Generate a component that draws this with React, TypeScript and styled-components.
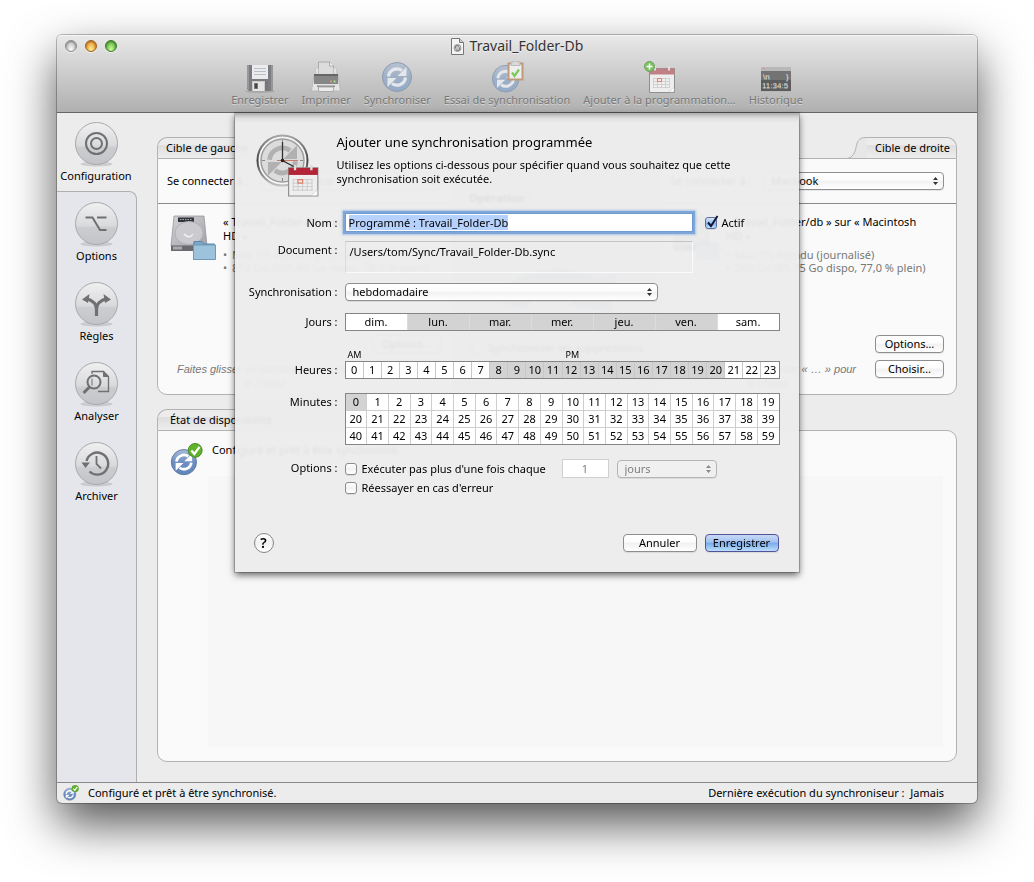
import React, { useEffect, useRef, useState } from 'react';
import styled, { createGlobalStyle, css } from 'styled-components';

const GlobalStyle = createGlobalStyle`
  *, *::before, *::after { box-sizing: border-box; }
  body {
    margin: 0;
    background: #fff;
    color: #000;
    font: 11px/14px "Lucida Grande", "Noto Sans", "Open Sans", sans-serif;
  }
  button, input, select { font: inherit; color: inherit; margin: 0; }
`;

/* ---------- window frame ---------- */

const Desktop = styled.div`
  display: flex;
  min-height: 100vh;
  padding: 35px 57px 79px;
`;

const Window = styled.div`
  flex: 1;
  display: flex;
  flex-direction: column;
  min-width: 0;
  border-radius: 5px;
  background: #ececec;
  box-shadow: 0 0 0 1px rgba(0, 0, 0, 0.25), 0 21px 48px rgba(0, 0, 0, 0.68);
`;

const Header = styled.header`
  height: 78px;
  border-bottom: 1px solid #666;
  border-radius: 5px 5px 0 0;
  background: linear-gradient(#e9e9e9, #cfcfcf 45%, #b0b0b0);
  box-shadow: inset 0 1px #f6f6f6;
`;

const TitleBar = styled.div`
  display: grid;
  grid-template-columns: 1fr auto 1fr;
  align-items: center;
  height: 22px;
  padding: 0 8px;
`;

const Lights = styled.div`
  display: flex;
  gap: 8px;
`;

const Light = styled.button<{ $rim: string; $core: string; $glow: string }>`
  width: 12px;
  height: 12px;
  padding: 0;
  border: 1px solid ${(p) => p.$rim};
  border-radius: 50%;
  background: radial-gradient(ellipse at 50% 90%, ${(p) => p.$glow}, ${(p) => p.$core} 75%);
  box-shadow: inset 0 1px 2px rgba(0, 0, 0, 0.35), 0 1px rgba(255, 255, 255, 0.6);
`;

const Title = styled.h1`
  display: flex;
  align-items: center;
  gap: 6px;
  margin: 0;
  color: #333;
  font-size: 14px;
  font-weight: 400;
  text-shadow: 0 1px rgba(255, 255, 255, 0.6);
`;

const Toolbar = styled.div`
  display: flex;
  justify-content: center;
  gap: 13px;
  padding-top: 4px;
`;

const ToolButton = styled.button`
  display: flex;
  flex-direction: column;
  align-items: center;
  padding: 0;
  border: 0;
  background: none;
  color: #787878;
  white-space: nowrap;
  text-shadow: 0 1px rgba(255, 255, 255, 0.45);
`;

const Body = styled.div`
  position: relative;
  flex: 1;
  display: flex;
  min-height: 0;
`;

const StatusBar = styled.footer`
  display: flex;
  align-items: center;
  justify-content: space-between;
  height: 21px;
  padding: 0 33px 0 6px;
  border-top: 1px solid #8a8a8a;
  border-radius: 0 0 5px 5px;
`;

const StatusText = styled.span`
  display: flex;
  align-items: center;
  gap: 9px;
`;

/* ---------- side bar ---------- */

const SideBar = styled.nav`
  display: flex;
  flex-direction: column;
  flex: 0 0 80px;
`;

const SideGroup = styled.div`
  flex: 1;
  border: 1px solid #b0b0b0;
  border-width: 1px 1px 0 0;
  border-top-right-radius: 8px;
  background: #e4e6eb;
`;

const SideButton = styled.button`
  display: flex;
  flex-direction: column;
  align-items: center;
  gap: 2px;
  width: 100%;
  height: 80px;
  padding: 10px 0 0;
  border: 0;
  background: none;
`;

const SideTop = styled.div`
  height: 78px;
  padding-right: 2px;

  ${SideButton} { padding-top: 9px; }
`;

/* ---------- panels ---------- */

const Main = styled.main`
  flex: 1;
  display: flex;
  flex-direction: column;
  gap: 14px;
  min-width: 0;
  padding: 24px 20px 20px;
`;

const Targets = styled.div`
  display: grid;
  grid-template-columns: 297px 1fr 297px;
  height: 258px;
`;

const Panel = styled.section`
  display: flex;
  flex-direction: column;
  min-width: 0;
`;

const GrowPanel = styled(Panel)`
  flex: 1;
`;

const TabRow = styled.div<{ $right?: boolean }>`
  display: flex;
  flex-direction: ${(p) => (p.$right ? 'row-reverse' : 'row')};
  height: 21px;
`;

const Tab = styled.h2<{ $right?: boolean; $pad: number }>`
  margin: 0;
  padding: 3px ${(p) => (p.$right ? `${p.$pad}px 0 8px` : `2px 0 ${p.$pad}px`)};
  border: 1px solid #b2b2b2;
  border-width: ${(p) => (p.$right ? '1px 1px 0 0' : '1px 0 0 1px')};
  border-radius: ${(p) => (p.$right ? '0 10px 0 0' : '10px 0 0 0')};
  background: linear-gradient(#ececec 35%, #dedede 38%, #eee);
  font-size: 11px;
  font-weight: 400;
  white-space: nowrap;
`;

const Box = styled.div<{ $right?: boolean }>`
  flex: 1;
  display: flex;
  flex-direction: column;
  border: 1px solid #b2b2b2;
  border-radius: ${(p) => (p.$right ? '10px 0 10px 10px' : '0 10px 10px 10px')};
  background: #fafafa;
`;

const ConnectRow = styled.label`
  display: flex;
  align-items: center;
  justify-content: space-between;
  height: 45px;
  padding: 0 12px 1px 9px;
  border-bottom: 1px solid #8a8a8a;
`;

const Volume = styled.div`
  display: flex;
  gap: 6px;
  padding: 11px 12px 0 11px;
`;

const VolumeName = styled.p`
  max-width: 208px;
  margin: 0 0 5px;
`;

const VolumeFacts = styled.ul`
  margin: 0;
  padding: 0 0 0 9px;
  color: #777;
  line-height: 13px;
  list-style: none;
  white-space: nowrap;

  li::before { content: "•"; float: left; margin-left: -9px; }
`;

const VolumeFoot = styled.div`
  display: grid;
  grid-template-columns: 1fr 69px;
  align-items: end;
  gap: 8px;
  margin-top: auto;
  padding: 0 12px 4px 8px;
`;

const Hint = styled.p`
  margin: 0;
  color: #777;
  font: italic 11px/14px "Liberation Sans", sans-serif;
  text-align: center;
`;

const FootButtons = styled.div`
  display: flex;
  flex-direction: column;
  gap: 7px;
  padding-bottom: 12px;
`;

const Operation = styled.section`
  display: flex;
  flex-direction: column;
  align-items: center;
  padding-top: 54px;
`;

const OperationTitle = styled.h2`
  align-self: flex-start;
  margin: 0 0 60px 15px;
  font-size: 11px;
`;

const StateRow = styled.div`
  display: flex;
  gap: 9px;
  padding: 12px 12px 0;
`;

const StateText = styled.p`
  margin: 0;
`;

const Log = styled.div`
  flex: 1;
  margin: 0 13px 14px 50px;
  background: #f7f7f7;
`;

/* ---------- controls ---------- */

const control = css`
  height: 18px;
  border: 1px solid #8e8e8e;
  border-radius: 4px;
  background: linear-gradient(#fff, #fcfcfc 45%, #f1f1f1 50%, #fff);
  box-shadow: 0 1px rgba(0, 0, 0, 0.08);
`;

const PushButton = styled.button<{ $main?: boolean; $width: number }>`
  ${control}
  width: ${(p) => p.$width}px;
  padding: 0;
  line-height: 16px;
  white-space: nowrap;
  ${(p) =>
    p.$main &&
    css`
      border-color: #55529c;
      background: linear-gradient(#c8d9f4, #a3c2f0 45%, #79a9eb 50%, #b9e0fb);
    `}
`;

const SelectFrame = styled.span<{ $width: number }>`
  position: relative;
  display: block;
  width: ${(p) => p.$width}px;
  max-width: 100%;
`;

const NativeSelect = styled.select`
  ${control}
  display: block;
  appearance: none;
  width: 100%;
  padding: 0 18px 0 7px;
  line-height: 16px;

  &:disabled {
    border-color: #b5b5b5;
    background: #f0f0f0;
    color: #7e7e7e;
    opacity: 1;
  }
`;

const Arrows = styled.svg`
  position: absolute;
  top: 5px;
  right: 6px;
  pointer-events: none;
`;

const Check = styled.input`
  appearance: none;
  display: grid;
  place-items: center;
  flex: none;
  width: 12px;
  height: 12px;
  border: 1px solid #8c8c8c;
  border-radius: 3px;
  background: linear-gradient(#fff, #f2f2f2 50%, #fff);
  box-shadow: 0 1px rgba(0, 0, 0, 0.08);

  &:checked {
    border-color: #5c6c9c;
    background: linear-gradient(#d9e6f8, #8bb6ee 60%, #bfe2fb);
  }
`;

const CheckFrame = styled.span`
  position: relative;
  display: block;
`;

const Tick = styled.svg`
  position: absolute;
  left: 0;
  bottom: 0;
  pointer-events: none;
`;

const CheckLabel = styled.label`
  display: flex;
  align-items: center;
  gap: 5px;
  white-space: nowrap;
`;

/* ---------- sheet ---------- */

const SheetLayer = styled.div`
  position: absolute;
  inset: 0 0 auto -1px;
  display: flex;
  justify-content: center;
`;

const Sheet = styled.form`
  width: 564px;
  padding: 21px 20px 19px 21px;
  background: linear-gradient(rgba(0, 0, 0, 0.28), rgba(0, 0, 0, 0.06) 5px, transparent 10px), rgba(236, 236, 236, 0.95);
  backdrop-filter: blur(1px);
  box-shadow: 0 0 0 1px rgba(0, 0, 0, 0.2), 0 3px 7px rgba(0, 0, 0, 0.6);
`;

const SheetHead = styled.div`
  display: flex;
  gap: 18px;
  margin-bottom: 15px;
`;

const SheetTitle = styled.h2`
  margin: 0 0 8px;
  font-size: 13px;
  line-height: 16px;
  font-weight: 400;
`;

const SheetIntro = styled.p`
  margin: 0;
  max-width: 430px;
`;

const Fields = styled.div`
  display: grid;
  grid-template-columns: 82px 435px;
  column-gap: 7px;
`;

const FieldName = styled.label<{ $top: number }>`
  margin-left: -20px;
  padding-top: ${(p) => p.$top}px;
  text-align: right;
  white-space: nowrap;
`;

const Field = styled.div<{ $after: number }>`
  display: flex;
  align-items: center;
  margin-bottom: ${(p) => p.$after}px;
`;

const NameInput = styled.input`
  width: 348px;
  height: 19px;
  margin-right: 12px;
  padding: 0 3px;
  border: 1px solid #6f9bd1;
  outline: 0;
  background: #fff;
  box-shadow: 0 0 0 2px #7ea6d8, 0 0 2px 3px rgba(126, 166, 216, 0.6);

  &::selection { background: #b5d1fc; color: #000; }
`;

const PathBox = styled.output`
  width: 348px;
  height: 32px;
  padding: 3px 4px;
  border: 1px solid #fafafa;
  border-top-color: #c4c4c4;
  border-left-color: #dadada;
`;

const Picker = styled.div<{ $columns: number; $line: string }>`
  display: grid;
  grid-template-columns: repeat(${(p) => p.$columns}, 1fr);
  gap: 1px;
  width: 100%;
  border: 1px solid #858585;
  background: ${(p) => p.$line};
`;

const Cell = styled.button`
  min-width: 0;
  height: 16px;
  padding: 0;
  border: 0;
  background: #fff;
  line-height: 16px;

  &[aria-pressed='true'] { background: #d3d3d3; }
`;

const HalfDays = styled.div`
  display: grid;
  grid-column: 2;
  grid-template-columns: 218px 1fr;
  padding-left: 3px;
  font-size: 9px;
  line-height: 12px;
`;

const Stack = styled.div`
  display: flex;
  flex-direction: column;
  gap: 3px;
`;

const RepeatRow = styled.div`
  display: grid;
  grid-template-columns: 209px auto 1fr;
  align-items: center;
  gap: 8px;
`;

const CountInput = styled.input`
  width: 47px;
  height: 19px;
  padding: 0;
  border: 1px solid #d0d0d0;
  background: #fff;
  text-align: center;

  &:disabled { color: #7e7e7e; }
`;

const SheetFoot = styled.div`
  display: flex;
  align-items: center;
  gap: 8px;
  margin-top: 38px;
`;

const HelpButton = styled.button`
  width: 20px;
  height: 20px;
  margin: 0 auto 0 -2px;
  padding: 0;
  border: 1px solid #858585;
  border-radius: 50%;
  background: linear-gradient(#fff, #f2f2f2 50%, #fff);
  font-size: 14px;
  font-weight: 600;
  line-height: 18px;
`;

/* ---------- drawings ---------- */

const SyncArrows = ({ color = '#fff' }: { color?: string }) => (
  <g fill="none" stroke={color} strokeWidth="3.2">
    <path d="M7.500 15.500a8.500 8.500 0 0 1 13.500-6" />
    <path d="M24.500 16.500a8.500 8.500 0 0 1-13.500 6" />
    <path d="M25.500 6v9h-9z" fill={color} stroke="none" />
    <path d="M6.500 26v-9h9z" fill={color} stroke="none" />
  </g>
);

const SyncBall = ({ id, pale }: { id: string; pale?: boolean }) => (
  <>
    <defs>
      <linearGradient id={id} x2="0" y2="1">
        <stop offset="0" stopColor={pale ? '#b7c3d2' : '#a9bcdb'} />
        <stop offset="0.5" stopColor={pale ? '#9fb0c6' : '#6f8fc0'} />
        <stop offset="1" stopColor={pale ? '#94abc6' : '#5f86bb'} />
      </linearGradient>
    </defs>
    <circle cx="16" cy="16" r="14.500" fill={`url(#${id})`} stroke={pale ? '#8c9bb0' : '#56709c'} />
    <SyncArrows color={pale ? '#e4e8ec' : '#fff'} />
  </>
);

const GoodSync = ({ id, size }: { id: string; size: number }) => (
  <svg width={size} height={size} viewBox="0 0 38 38" aria-hidden="true">
    <g transform="translate(0 6)">
      <SyncBall id={id} />
    </g>
    <circle cx="29" cy="8.500" r="8" fill="#62b32c" stroke="#3d8516" />
    <path d="M24.500 8.500l3.500 4 6-8" fill="none" stroke="#fff" strokeWidth="2.600" />
  </svg>
);

const DocIcon = () => (
  <svg width="13" height="17" viewBox="0 0 13 17" aria-hidden="true">
    <path d="M.5.5h8l4 4v12H.5z" fill="#f4f4f4" stroke="#777" />
    <path d="M8.500.5v4h4" fill="#ccc" stroke="#777" />
    <circle cx="6.500" cy="10" r="3.500" fill="#c4c4c4" stroke="#9c9c9c" />
    <path d="M4.500 10.500a2 2 0 0 1 3.500-2M8.500 9.500a2 2 0 0 1-3.500 2" stroke="#777" fill="none" />
  </svg>
);

const FloppyIcon = () => (
  <svg width="32" height="32" viewBox="0 0 32 32" aria-hidden="true">
    <ellipse cx="16" cy="30.500" rx="15" ry="1.500" fill="#999" opacity=".6" />
    <path d="M3 4h26v26H5l-2-2z" fill="#7b7d82" />
    <path d="M3 4h2v25l-2-2zM27 4h2v26h-2z" fill="#95979b" />
    <path d="M8 4h16v14H8z" fill="#ececec" />
    <path d="M10 7.500h12M10 10.500h12M10 13.500h12" stroke="#b9c0ca" />
    <path d="M8 20h16v10H8z" fill="#c9c9c9" />
    <path d="M9 21h11v9H9z" fill="#e5e5e5" />
    <path d="M10 22h4v6h-4z" fill="#777" />
    <path d="M11 23h2v4h-2z" fill="#444" />
    <path d="M21 20h3v10h-3z" fill="#777" />
  </svg>
);

const PrinterIcon = () => (
  <svg width="32" height="32" viewBox="0 0 32 32" aria-hidden="true">
    <path d="M8.500 1h11l4 4v9h-15z" fill="#dcdcdc" stroke="#aaa" />
    <path d="M19.500 1v4h4" fill="#f5f5f5" stroke="#aaa" />
    <path d="M5.500 7h3v6h-3zM23.500 7h3v6h-3z" fill="#e2e2e2" stroke="#bbb" strokeWidth=".5" />
    <path d="M4 14h24l2.500 16h-29z" fill="#e4e4e4" stroke="#b9b9b9" />
    <path d="M4 13h24v10H4z" fill="#868686" />
    <path d="M4 13h24v2H4z" fill="#666" />
    <path d="M20 19.500h2v2h-2z" fill="#c98" />
    <path d="M23.500 19.500h2v2h-2z" fill="#a3dc84" />
    <path d="M7 24.500h18v1.500H7z" fill="#888" />
    <path d="M8.500 26h15v4.500h-15z" fill="#ebebeb" stroke="#aaa" />
  </svg>
);

const SyncIcon = () => (
  <svg width="32" height="32" viewBox="0 0 32 32" aria-hidden="true">
    <SyncBall id="tool-sync" pale />
  </svg>
);

const TrialIcon = () => (
  <svg width="34" height="32" viewBox="0 0 34 32" aria-hidden="true">
    <g transform="translate(1 3) scale(.92)">
      <SyncBall id="tool-trial" pale />
    </g>
    <path d="M18.500 2.500h14v16h-14z" fill="#eee" stroke="#bd9a7c" strokeWidth="2" />
    <path d="M21 1h2.500V0h4v1H30v3.500h-9z" fill="#dadada" stroke="#aaa" strokeWidth=".7" />
    <path d="M22 11.500l2.500 3.500 4.500-6.500" fill="none" stroke="#7ccb5c" strokeWidth="2.300" />
  </svg>
);

const Calendar = ({ red }: { red: string }) => (
  <>
    <path d="M.5 2.500h25v24H.5z" fill="#eee" stroke="#8f8f8f" />
    <path d="M.5 2.500h25v6H.5z" fill={red} />
    <path d="M6 0v4.500M20 0v4.500" stroke="#ddd" strokeWidth="2" />
    <path d="M4 12.500h17M4 15.500h17M4 18.500h17M4 21.500h17M4.500 12v10M8.500 12v10M12.500 12v10M16.500 12v10M20.500 12v10" stroke="#cacaca" strokeWidth=".8" />
    <path d="M8.500 12.500h4v3h-4z" fill="none" stroke="#e2806a" />
    <path d="M25 21v5h-5z" fill="#fff" stroke="#c2c2c2" strokeWidth=".5" />
  </>
);

const AddCalendarIcon = () => (
  <svg width="32" height="32" viewBox="0 0 32 32" aria-hidden="true">
    <g transform="translate(5 5)">
      <Calendar red="#c08085" />
    </g>
    <circle cx="5.500" cy="5.500" r="5" fill="#7dc167" stroke="#69a556" />
    <path d="M5.500 2.500v6M2.500 5.500h6" stroke="#fff" strokeWidth="1.500" />
  </svg>
);

const HistoryIcon = () => (
  <svg width="32" height="32" viewBox="0 0 32 32" aria-hidden="true">
    <path d="M1 6h30v25H1z" fill="#b8b8b8" />
    <path d="M1 10h30v20H1z" fill="#5c5c5c" />
    <path d="M1 10h30v9H1z" fill="#737373" />
    <path d="M2 7.500h3" stroke="#c99" />
    <g fill="#d0d0d0" fontFamily="Liberation Sans, sans-serif" fontSize="8">
      <text x="3" y="18">\n</text>
      <text x="26" y="18">{'}'}</text>
      <text x="2" y="27">11:34:5</text>
    </g>
  </svg>
);

const Puck = ({ id, children }: { id: string; children: React.ReactNode }) => (
  <svg width="45" height="45" viewBox="0 0 45 45" aria-hidden="true">
    <defs>
      <linearGradient id={id} x2="0" y2="1">
        <stop offset="0" stopColor="#f0f0f1" />
        <stop offset="0.550" stopColor="#d9dadc" />
        <stop offset="0.600" stopColor="#cccdd0" />
        <stop offset="1" stopColor="#c3c4c7" />
      </linearGradient>
    </defs>
    <ellipse cx="22.500" cy="42" rx="16" ry="2.500" fill="#999" opacity=".35" />
    <circle cx="22.500" cy="21.500" r="21" fill={`url(#${id})`} stroke="#a7a8aa" />
    <g fill="none" stroke="#707070" strokeWidth="2">
      {children}
    </g>
  </svg>
);

const TargetGlyph = () => (
  <>
    <circle cx="22.500" cy="21.500" r="10.500" />
    <circle cx="22.500" cy="21.500" r="5.500" />
  </>
);

const OptionGlyph = () => <path d="M11.500 15.500h7l7.500 12.500h6.500M23 15.500h9.500" />;

const RulesGlyph = () => (
  <>
    <path d="M22.500 34V27c0-5-4-8.500-10-10.500M22.500 27c0-5 4-8.500 10-10.500" strokeWidth="3.200" />
    <path d="M8 17.500l7.500-5.500-1.500 9zM37 17.500l-7.500-5.500 1.500 9z" fill="#707070" stroke="none" />
  </>
);

const AnalyseGlyph = () => (
  <>
    <path d="M18 12V9.500h11.500l5 5V29.500H24" strokeWidth="1.300" />
    <path d="M29.500 9.500v5h5z" fill="#707070" strokeWidth="1" />
    <circle cx="20" cy="20" r="6.500" />
    <path d="M18 16.500v7" strokeWidth="1" />
    <path d="M15.500 25L9.500 31" strokeWidth="3" />
  </>
);

const ArchiveGlyph = () => (
  <>
    <path d="M12.500 19a11 11 0 1 1 3 10.500" strokeWidth="2.400" />
    <path d="M7.500 20.500h8.500l-4.500 5.500z" fill="#707070" stroke="none" />
    <path d="M22.500 14v8l4.500 4.500" strokeWidth="1.800" />
  </>
);

const DriveIcon = ({ id }: { id: string }) => (
  <svg width="48" height="46" viewBox="0 0 48 46" aria-hidden="true">
    <defs>
      <linearGradient id={id} x2="1" y2="1">
        <stop offset="0" stopColor="#d3d3d6" />
        <stop offset="1" stopColor="#a2a2a8" />
      </linearGradient>
    </defs>
    <path d="M5 1h30l3 30H2z" fill={`url(#${id})`} stroke="#8d8d92" strokeWidth=".7" />
    <path d="M2 30.500h36V36H2z" fill="#6a6b71" />
    <path d="M4 31.500h9v3H4z" fill="#a9aab1" />
    <path d="M9 2.500h16v4.500H9z" fill="#33343a" />
    <path d="M11 4.500h12" stroke="#9aa" strokeDasharray="1.500 1" />
    <ellipse cx="20" cy="18" rx="14" ry="11.500" fill="#cbcbcf" stroke="#b0b0b5" />
    <path d="M15 19c3 3.500 7 3.500 9 0" fill="none" stroke="#f2f2f2" strokeWidth="1.500" />
    <path d="M25 26.500h8l2 2.500h10.500v15.500H24.500z" fill="#7ba7c6" stroke="#5b87aa" />
    <path d="M24.500 30h22v14.500h-22z" fill="#9cc2dc" stroke="#6d98b8" />
  </svg>
);

const OperationArrow = () => (
  <svg width="130" height="76" viewBox="0 0 130 76" aria-hidden="true">
    <path d="M5 38a60 36 0 0 1 100-25l20-5-6 40-44-8 14-10a36 20 0 0 0-54 14z" fill="#9db4d6" />
  </svg>
);

const ScheduleIcon = () => (
  <svg width="63" height="64" viewBox="0 0 63 64" aria-hidden="true">
    <defs>
      <linearGradient id="rim" x2="0" y2="1">
        <stop offset="0" stopColor="#a5a5a5" />
        <stop offset="0.500" stopColor="#444" />
        <stop offset="1" stopColor="#c0c0c0" />
      </linearGradient>
    </defs>
    <circle cx="26.500" cy="26.500" r="25" fill="#f6f6f6" stroke="url(#rim)" strokeWidth="2" />
    <circle cx="26.500" cy="26.500" r="21.500" fill="#dcdcdc" stroke="#9c9c9c" strokeWidth="1.500" />
    <g transform="translate(2 2) scale(1.530)" opacity=".9">
      <SyncArrows color="#adadad" />
    </g>
    <path d="M26.500 6v3M47 26.500h-3M6 26.500h3M26.500 47v-3" stroke="#888" />
    <path d="M21 26.500h21" stroke="#cf7a68" />
    <path d="M26.500 8v18.500l13 7" fill="none" stroke="#333" strokeWidth="1.300" />
    <circle cx="26.500" cy="26.500" r="1.800" fill="#222" />
    <g transform="translate(32 31) scale(1.170)">
      <Calendar red="#b32436" />
    </g>
  </svg>
);

const Flare = ({ right }: { right?: boolean }) => (
  <svg width="20" height="22" viewBox="0 0 20 22" aria-hidden="true">
    <g transform={right ? 'translate(20 0) scale(-1 1)' : undefined}>
      <path d="M0 .5h1c8 0 9 5 10 10s3 10 9 11H0z" fill="#e7e7e7" />
      <path d="M0 .5h1c8 0 9 5 10 10s3 10 9 11" fill="none" stroke="#b2b2b2" />
    </g>
  </svg>
);

/* ---------- composed pieces ---------- */

type PopUpProps = { id?: string; width: number; value: string; disabled?: boolean; label?: string };

const PopUp = ({ id, width, value, disabled, label }: PopUpProps) => (
  <SelectFrame $width={width}>
    <NativeSelect id={id} defaultValue={value} disabled={disabled} aria-label={label}>
      <option>{value}</option>
    </NativeSelect>
    <Arrows width="5" height="8" viewBox="0 0 5 8" aria-hidden="true">
      <path d="M0 3l2.500-3L5 3zM0 5l2.500 3L5 5z" fill={disabled ? '#888' : '#333'} />
    </Arrows>
  </SelectFrame>
);

type TargetProps = {
  id: string;
  right?: boolean;
  title: string;
  host: string;
  name: string;
  facts: string[];
};

const Target = ({ id, right, title, host, name, facts }: TargetProps) => (
  <Panel>
    <TabRow $right={right}>
      <Tab $right={right} $pad={right ? 6 : 8}>
        {title}
      </Tab>
      <Flare right={right} />
    </TabRow>
    <Box $right={right}>
      <ConnectRow>
        Se connecter à :
        <PopUp width={181} value={host} />
      </ConnectRow>
      <Volume>
        <DriveIcon id={id} />
        <div>
          <VolumeName>{name}</VolumeName>
          <VolumeFacts>
            {facts.map((fact) => (
              <li key={fact}>{fact}</li>
            ))}
          </VolumeFacts>
        </div>
      </Volume>
      <VolumeFoot>
        <Hint>
          Faites glisser un dossier « … » pour
          <br />
          le choisir
        </Hint>
        <FootButtons>
          <PushButton type="button" $width={69}>Options…</PushButton>
          <PushButton type="button" $width={69}>Choisir…</PushButton>
        </FootButtons>
      </VolumeFoot>
    </Box>
  </Panel>
);

type GridProps = { labels: string[]; initial: number[]; columns: number; line: string; labelledBy: string };

const ToggleGrid = ({ labels, initial, columns, line, labelledBy }: GridProps) => {
  const [picked, setPicked] = useState(() => new Set(initial));
  const toggle = (index: number) =>
    setPicked((old) => {
      const next = new Set(old);
      if (!next.delete(index)) next.add(index);
      return next;
    });
  return (
    <Picker $columns={columns} $line={line} role="group" aria-labelledby={labelledBy}>
      {labels.map((label, index) => (
        <Cell key={label} type="button" aria-pressed={picked.has(index)} onClick={() => toggle(index)}>
          {label}
        </Cell>
      ))}
    </Picker>
  );
};

const range = (from: number, to: number) => Array.from({ length: to - from }, (_, i) => from + i);

const tools = [
  { label: 'Enregistrer', icon: <FloppyIcon /> },
  { label: 'Imprimer', icon: <PrinterIcon /> },
  { label: 'Synchroniser', icon: <SyncIcon /> },
  { label: 'Essai de synchronisation', icon: <TrialIcon /> },
  { label: 'Ajouter à la programmation…', icon: <AddCalendarIcon /> },
  { label: 'Historique', icon: <HistoryIcon /> },
];

const sections = [
  { label: 'Options', glyph: <OptionGlyph /> },
  { label: 'Règles', glyph: <RulesGlyph /> },
  { label: 'Analyser', glyph: <AnalyseGlyph /> },
  { label: 'Archiver', glyph: <ArchiveGlyph /> },
];

const ScheduleSheet = () => {
  const nameRef = useRef<HTMLInputElement>(null);
  useEffect(() => {
    nameRef.current?.focus();
    nameRef.current?.select();
  }, []);

  return (
    <SheetLayer>
      <Sheet onSubmit={(event) => event.preventDefault()}>
        <SheetHead>
          <ScheduleIcon />
          <div>
            <SheetTitle>Ajouter une synchronisation programmée</SheetTitle>
            <SheetIntro>
              Utilisez les options ci-dessous pour spécifier quand vous souhaitez que cette synchronisation soit
              exécutée.
            </SheetIntro>
          </div>
        </SheetHead>
        <Fields>
          <FieldName htmlFor="name" $top={3}>Nom :</FieldName>
          <Field $after={9}>
            <NameInput id="name" ref={nameRef} defaultValue="Programmé : Travail_Folder-Db" />
            <CheckLabel>
              <CheckFrame>
                <Check type="checkbox" defaultChecked />
                <Tick width="14" height="14" viewBox="0 0 14 14" aria-hidden="true">
                  <path d="M3 7.500l3 3.500L12.500 1" fill="none" stroke="#111a33" strokeWidth="2" />
                </Tick>
              </CheckFrame>
              Actif
            </CheckLabel>
          </Field>

          <FieldName htmlFor="path" $top={2}>Document :</FieldName>
          <Field $after={10}>
            <PathBox id="path">/Users/tom/Sync/Travail_Folder-Db.sync</PathBox>
          </Field>

          <FieldName htmlFor="period" $top={2}>Synchronisation :</FieldName>
          <Field $after={12}>
            <PopUp id="period" width={313} value="hebdomadaire" />
          </Field>

          <FieldName as="span" id="days" $top={2}>Jours :</FieldName>
          <Field $after={18}>
            <ToggleGrid
              labels={['dim.', 'lun.', 'mar.', 'mer.', 'jeu.', 'ven.', 'sam.']}
              initial={range(1, 6)}
              columns={7}
              line="#dcdcdc"
              labelledBy="days"
            />
          </Field>

          <HalfDays>
            <span>AM</span>
            <span>PM</span>
          </HalfDays>
          <FieldName as="span" id="hours" $top={2}>Heures :</FieldName>
          <Field $after={14}>
            <ToggleGrid
              labels={range(0, 24).map(String)}
              initial={range(8, 21)}
              columns={24}
              line="#c8c8c8"
              labelledBy="hours"
            />
          </Field>

          <FieldName as="span" id="minutes" $top={2}>Minutes :</FieldName>
          <Field $after={14}>
            <ToggleGrid
              labels={range(0, 60).map(String)}
              initial={[0]}
              columns={20}
              line="#cecece"
              labelledBy="minutes"
            />
          </Field>

          <FieldName as="span" $top={2}>Options :</FieldName>
          <Stack>
            <RepeatRow>
              <CheckLabel>
                <Check type="checkbox" />
                Exécuter pas plus d'une fois chaque
              </CheckLabel>
              <CountInput defaultValue="1" disabled aria-label="Nombre" />
              <PopUp width={100} value="jours" disabled label="Unité" />
            </RepeatRow>
            <CheckLabel>
              <Check type="checkbox" />
              Réessayer en cas d'erreur
            </CheckLabel>
          </Stack>
        </Fields>
        <SheetFoot>
          <HelpButton type="button" aria-label="Aide">?</HelpButton>
          <PushButton type="button" $width={74}>Annuler</PushButton>
          <PushButton type="submit" $width={74} $main>Enregistrer</PushButton>
        </SheetFoot>
      </Sheet>
    </SheetLayer>
  );
};

export default function App() {
  return (
    <>
      <GlobalStyle />
      <Desktop>
        <Window>
          <Header>
            <TitleBar>
              <Lights>
                <Light aria-label="Fermer" $rim="#8a8a8a" $core="#bdbdbd" $glow="#fff" />
                <Light aria-label="Réduire" $rim="#a0601c" $core="#e9962f" $glow="#fff59a" />
                <Light aria-label="Agrandir" $rim="#3c7a2a" $core="#5cb540" $glow="#d4ffa0" />
              </Lights>
              <Title>
                <DocIcon />
                Travail_Folder-Db
              </Title>
            </TitleBar>
            <Toolbar>
              {tools.map((tool) => (
                <ToolButton key={tool.label} type="button">
                  {tool.icon}
                  {tool.label}
                </ToolButton>
              ))}
            </Toolbar>
          </Header>
          <Body>
            <SideBar>
              <SideTop>
                <SideButton type="button" aria-current="page">
                  <Puck id="puck-configuration">
                    <TargetGlyph />
                  </Puck>
                  Configuration
                </SideButton>
              </SideTop>
              <SideGroup>
                {sections.map((section) => (
                  <SideButton key={section.label} type="button">
                    <Puck id={`puck-${section.label}`}>{section.glyph}</Puck>
                    {section.label}
                  </SideButton>
                ))}
              </SideGroup>
            </SideBar>
            <Main>
              <Targets>
                <Target
                  id="drive-left"
                  title="Cible de gauche"
                  host="Volume local"
                  name="« Travail_Folder-Db » sur « Macintosh HD »"
                  facts={['Mac OS étendu (journalisé)', '852 Go (605,49 Go dispo, 28,9 % plein)']}
                />
                <Operation>
                  <OperationTitle>Opération :</OperationTitle>
                  <OperationArrow />
                  <CheckLabel>
                    <Check type="checkbox" />
                    Synchroniser les suppressions
                  </CheckLabel>
                </Operation>
                <Target
                  id="drive-right"
                  right
                  title="Cible de droite"
                  host="Macbook"
                  name="« Travail_Folder/db » sur « Macintosh HD »"
                  facts={['Mac OS étendu (journalisé)', '269 Go (61,75 Go dispo, 77,0 % plein)']}
                />
              </Targets>
              <GrowPanel>
                <TabRow>
                  <Tab $pad={12}>État de disponibilité</Tab>
                  <Flare />
                </TabRow>
                <Box>
                  <StateRow>
                    <GoodSync id="state-sync" size={33} />
                    <StateText>Configuré et prêt à être synchronisé.</StateText>
                  </StateRow>
                  <Log />
                </Box>
              </GrowPanel>
            </Main>
            <ScheduleSheet />
          </Body>
          <StatusBar>
            <StatusText>
              <GoodSync id="status-sync" size={16} />
              Configuré et prêt à être synchronisé.
            </StatusText>
            <span>Dernière exécution du synchroniseur :&nbsp; Jamais</span>
          </StatusBar>
        </Window>
      </Desktop>
    </>
  );
}
